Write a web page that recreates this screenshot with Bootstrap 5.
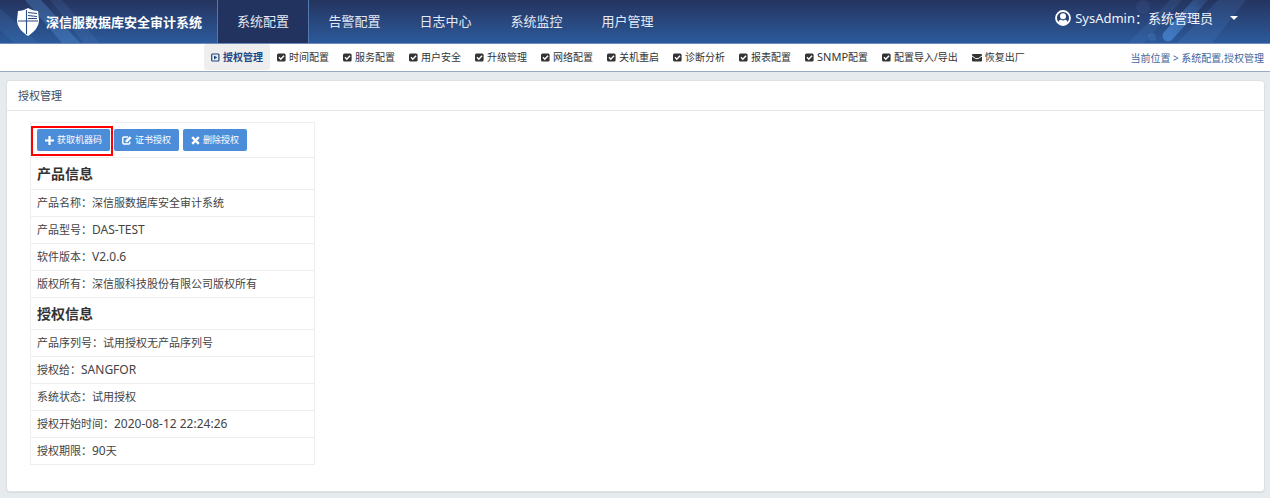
<!DOCTYPE html>
<html lang="zh-CN">
<head>
<meta charset="utf-8">
<meta name="viewport" content="width=device-width, initial-scale=1">
<title>深信服数据库安全审计系统</title>
<link href="https://cdn.jsdelivr.net/npm/bootstrap@5.3.0/dist/css/bootstrap.min.css" rel="stylesheet">
<style>
body { font-family: "Noto Sans", "Noto Sans CJK SC", sans-serif; font-size: 11px; line-height: 16px; color: #444; background: #e6ebee; }
.topbar { height: 44px; background: linear-gradient(#25345f, #2c5a9b); border-bottom: 1px solid #6d8abb; font-size: 13px; color: #e8eef8; overflow: hidden; }
.topbar > .d-flex { position: relative; }
.deco { position: absolute; top: 0; height: 43px; }
.deco-left { left: 0; width: 110px; }
.deco-right { right: 0; width: 150px; }
.brand { width: 217px; padding-left: 17px; gap: 7px; font-weight: 700; color: #fff; text-decoration: none; white-space: nowrap; }
.main-link { width: 91px; height: 43px; line-height: 42px; text-align: center; color: #e3e9f5; text-decoration: none; border: solid transparent; border-width: 0 1px; }
.main-link.active { background: #22335f; border-color: #5577b0; width: 92px; }
.user-btn { border: 0; background: none; color: #f0f4fb; padding: 0 32px 8px 0; gap: 4px; }
.user-btn::after { margin-left: 13px; border-width: 4px 4px 0; border-top-color: #fff; }
.subbar { height: 28px; background: #fff; border-bottom: 1px solid #98a9c0; font-size: 10px; padding: 0 6px 0 204px; }
.sub-link { height: 26px; padding: 0 7px; gap: 3px; color: #333; text-decoration: none; border-radius: 3px; white-space: nowrap; }
.sub-link.active { background: #eee; color: #1d4785; font-weight: 700; }
.crumb { color: #3f659c; white-space: nowrap; }
.page { padding: 8px 5px 6px 6px; }
.panel { border: 1px solid #dde1e4; border-radius: 4px; box-shadow: 0 1px 1px #d8dde1; }
.panel-title { height: 30px; padding: 0 11px; border-bottom: 1px solid #e8e8e8; color: #3d4d63; margin: 0; font-size: 11px; line-height: 30px; font-weight: 400; }
.panel-main { padding: 11px 23px 26px; }
.info { width: 285px; margin: 0; border: 1px solid #eee; color: #444; }
.info td, .info th { height: 27px; padding: 0 6px; border: 1px solid #eee; vertical-align: middle; font-weight: 400; }
.info th { height: 32px; font-size: 14px; font-weight: 700; color: #333; }
.info .tools { height: 35px; }
.latin { font-size: 12px; }
.sub-link .latin { font-size: 11px; }
.act { display: inline-flex; align-items: center; height: 22px; padding: 0 8px; gap: 3px; background: #4c8dda; border: 0; border-radius: 2px; color: #fff; font-size: 9px; }
.callout { position: relative; display: flex; }
.callout::after { content: ""; position: absolute; inset: -3px -3px -5px -6px; border: 2px solid #f00; pointer-events: none; }
</style>
</head>
<body class="d-flex flex-column min-vh-100">
<svg class="d-none" aria-hidden="true">
  <symbol id="check" viewBox="0 0 9 9"><rect y=".5" width="8.6" height="8" rx="1.5" fill="#333"/><path d="M2 4.3 3.8 6.2 7 2.8" fill="none" stroke="#fff" stroke-width="1.4"/></symbol>
</svg>
<header class="topbar position-relative">
  <svg class="deco deco-left" viewBox="0 0 110 43" aria-hidden="true"><path d="M0 8 38 43H14L0 30z" fill="#4f8bcf" opacity=".15"/><path d="M25 0h16l39 43H62z" fill="#5c9be0" opacity=".3"/><path d="M50 0h12l38 43H84z" fill="#6590d0" opacity=".15"/></svg>
  <svg class="deco deco-right" viewBox="0 0 150 43" aria-hidden="true">
    <defs><linearGradient id="pill" x1="0" y1="1" x2="1" y2="0"><stop stop-color="#4683cf" stop-opacity=".8"/><stop offset="1" stop-color="#4683cf" stop-opacity=".15"/></linearGradient></defs>
    <path d="M8 43 50 0h12L24 43z" fill="#4e8bd0" opacity=".15"/><path d="M57 43 98 0h28L92 43z" fill="#4e8bd0" opacity=".18"/><path d="M48 36 86-6" stroke="url(#pill)" stroke-width="11" stroke-linecap="round"/><circle cx="23" cy="7" r="7" fill="#4e70b0" opacity=".15"/><circle cx="32" cy="37" r="4" fill="#548bd0" opacity=".25"/></svg>
  <div class="d-flex">
    <a class="brand d-flex align-items-center" href="#">
      <svg width="22" height="28" viewBox="0 0 22 28" aria-hidden="true"><path d="M11 0C8 2 4 3 1 3L0 12c0 7 5 12 11 16 6-4 11-9 11-16l-1-9c-3 0-7-1-10-3z" fill="#fff"/><path d="M9.5 2v24M1 13h20M11 4.5l9 1M11 7.5l9 1M11 10.5h9" stroke="#2c4a84" stroke-width="1.1" fill="none"/></svg>
      <span>深信服数据库安全审计系统</span>
    </a>
    <nav class="d-flex" aria-label="主导航">
      <a class="main-link active" href="#">系统配置</a>
      <a class="main-link" href="#">告警配置</a>
      <a class="main-link" href="#">日志中心</a>
      <a class="main-link" href="#">系统监控</a>
      <a class="main-link" href="#">用户管理</a>
    </nav>
    <button class="user-btn dropdown-toggle d-flex align-items-center ms-auto text-nowrap" type="button">
      <svg width="16" height="16" viewBox="0 0 16 16" aria-hidden="true"><circle cx="8" cy="8" r="7" fill="none" stroke="#fff" stroke-width="1.8"/><circle cx="8" cy="6.3" r="3" fill="#fff"/><path d="M3 12.8c1-2.5 2-3 3-3 1.300.8 2.700.8 4 0 1 0 2 .5 3 3-3 3-7 3-10 0z" fill="#fff"/></svg>
      <span>SysAdmin：系统管理员</span>
    </button>
  </div>
</header>
<div class="subbar d-flex">
  <nav class="d-flex" aria-label="系统配置">
    <a class="sub-link active d-flex align-items-center" href="#"><svg width="9" height="9" viewBox="0 0 9 9" aria-hidden="true"><rect x=".7" y="1" width="7.200" height="7" rx=".8" fill="none" stroke="#1d4785" stroke-width="1.200"/><path d="M3 2.600 6.300 4.500 3 6.400z" fill="#1d4785"/></svg>授权管理</a>
    <a class="sub-link d-flex align-items-center" href="#"><svg width="9" height="9"><use href="#check"/></svg>时间配置</a>
    <a class="sub-link d-flex align-items-center" href="#"><svg width="9" height="9"><use href="#check"/></svg>服务配置</a>
    <a class="sub-link d-flex align-items-center" href="#"><svg width="9" height="9"><use href="#check"/></svg>用户安全</a>
    <a class="sub-link d-flex align-items-center" href="#"><svg width="9" height="9"><use href="#check"/></svg>升级管理</a>
    <a class="sub-link d-flex align-items-center" href="#"><svg width="9" height="9"><use href="#check"/></svg>网络配置</a>
    <a class="sub-link d-flex align-items-center" href="#"><svg width="9" height="9"><use href="#check"/></svg>关机重启</a>
    <a class="sub-link d-flex align-items-center" href="#"><svg width="9" height="9"><use href="#check"/></svg>诊断分析</a>
    <a class="sub-link d-flex align-items-center" href="#"><svg width="9" height="9"><use href="#check"/></svg>报表配置</a>
    <a class="sub-link d-flex align-items-center" href="#"><svg width="9" height="9"><use href="#check"/></svg><span><span class="latin">SNMP</span>配置</span></a>
    <a class="sub-link d-flex align-items-center" href="#"><svg width="9" height="9"><use href="#check"/></svg>配置导入/导出</a>
    <a class="sub-link d-flex align-items-center" href="#"><svg width="10" height="9" viewBox="0 0 10 9" aria-hidden="true"><rect y="1" width="10" height="7.500" rx="1" fill="#333"/><path d="M0 3 3.800 5.600h2.400L10 3" fill="none" stroke="#fff"/></svg>恢复出厂</a>
  </nav>
  <div class="crumb d-flex align-items-center ms-auto"><span>当前位置 &gt; 系统配置,授权管理</span></div>
</div>
<main class="page d-flex flex-column flex-grow-1">
  <section class="panel bg-white flex-grow-1">
    <h1 class="panel-title">授权管理</h1>
    <div class="panel-main">
      <table class="info">
        <tbody>
          <tr><td class="tools"><div class="d-flex gap-1">
            <span class="callout"><button class="act" type="button"><svg width="9" height="9" viewBox="0 0 9 9" aria-hidden="true"><path d="M4.500 0v9M0 4.500h9" stroke="#fff" stroke-width="2.200"/></svg>获取机器码</button></span>
            <button class="act" type="button"><svg width="10" height="9" viewBox="0 0 10 9" aria-hidden="true"><path d="M6 1H2Q.8 1 .8 2.200v4.600Q.8 8 2 8h4.600Q7.800 8 7.800 6.800V5.500" fill="none" stroke="#fff" stroke-width="1.400"/><path d="M3.500 6.300V4.600L7.800.3l1.800 1.800L5.300 6.300z" fill="#fff"/></svg>证书授权</button>
            <button class="act" type="button"><svg width="9" height="9" viewBox="0 0 9 9" aria-hidden="true"><path d="m1.200 1.200 6.600 6.600m0-6.600L1.200 7.800" stroke="#fff" stroke-width="2.400"/></svg>删除授权</button>
          </div></td></tr>
          <tr><th scope="rowgroup">产品信息</th></tr>
          <tr><td>产品名称：深信服数据库安全审计系统</td></tr>
          <tr><td>产品型号：<span class="latin">DAS-TEST</span></td></tr>
          <tr><td>软件版本：<span class="latin">V2.0.6</span></td></tr>
          <tr><td>版权所有：深信服科技股份有限公司版权所有</td></tr>
          <tr><th scope="rowgroup">授权信息</th></tr>
          <tr><td>产品序列号：试用授权无产品序列号</td></tr>
          <tr><td>授权给：<span class="latin">SANGFOR</span></td></tr>
          <tr><td>系统状态：试用授权</td></tr>
          <tr><td>授权开始时间：<span class="latin">2020-08-12 22:24:26</span></td></tr>
          <tr><td>授权期限：<span class="latin">90</span>天</td></tr>
        </tbody>
      </table>
    </div>
  </section>
</main>
<script src="https://cdn.jsdelivr.net/npm/bootstrap@5.3.0/dist/js/bootstrap.bundle.min.js"></script>
</body>
</html>
